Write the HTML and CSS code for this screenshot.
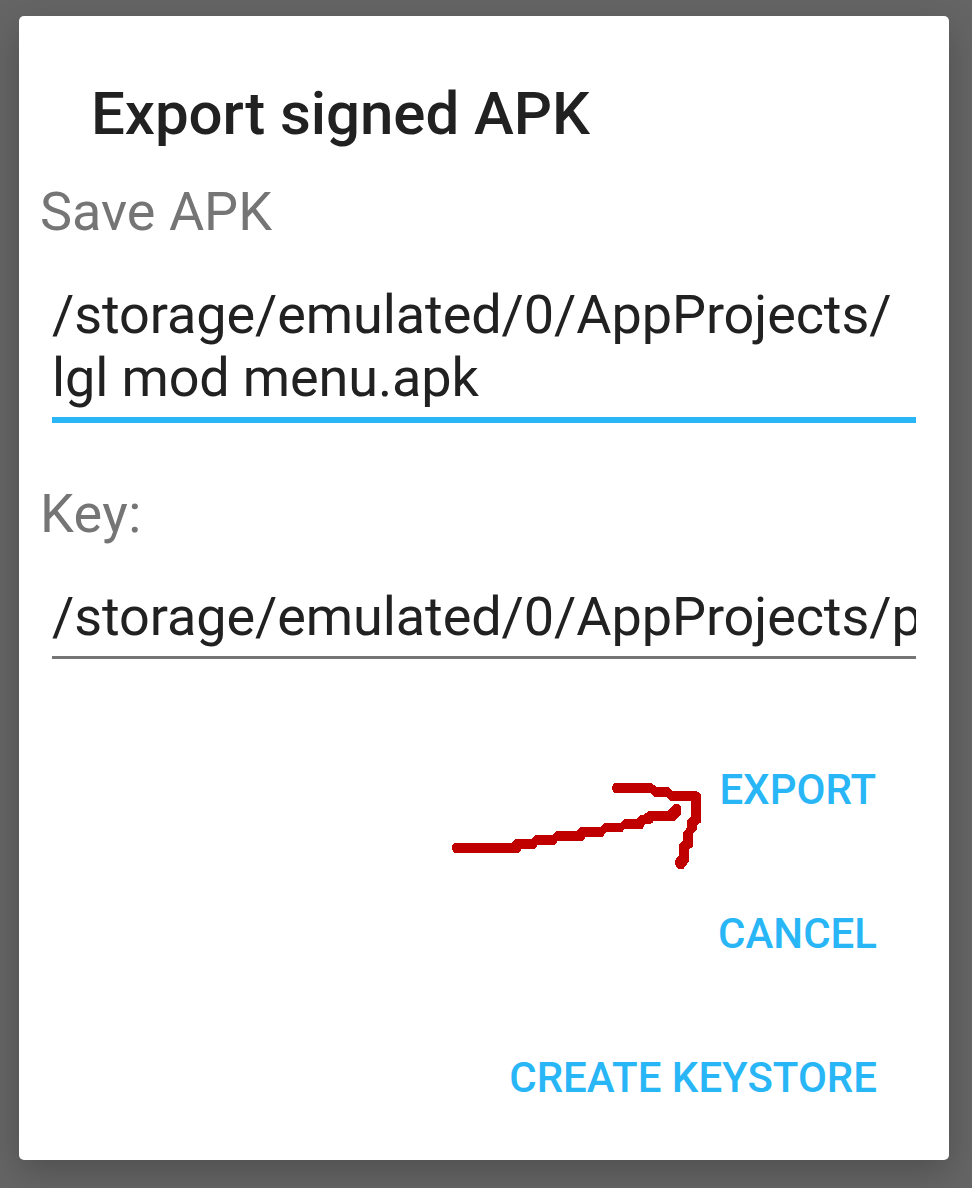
FILE: index.html
```html
<!DOCTYPE html>
<html lang="en">
<head>
<meta charset="utf-8">
<title>Export signed APK</title>
<link rel="stylesheet" href="styles.css">
</head>
<body>
<main class="dialog">
  <h1 class="title">Export signed APK</h1>
  <div class="label">Save APK</div>
  <div class="field field-active">/storage/emulated/0/AppProjects/<br><span class="filename">lgl mod menu.apk</span></div>
  <div class="label label-key">Key:</div>
  <div class="field field-key">/storage/emulated/0/AppProjects/p</div>
  <div class="actions">
    <button class="action export">EXPORT</button>
    <button class="action cancel">CANCEL</button>
    <button class="action create">CREATE KEYSTORE</button>
  </div>
  <svg class="arrow" viewBox="0 0 840 360" width="280" height="120">
    <path d="M45 249H215L228 237H273L288 225H337L350 213H409L422 201H480L495 189H540L555 177H588L600 165H610L626 153H684L698 138Q702 131 710 131Q722 133 723 144V162L705 182H638V188L630 193H615L607 207H552L547 217H497L488 231H435V235L428 243H353L345 255H293L285 267H243V271L236 279H46Q36 275 36 264Q36 252 45 249Z"/>
    <path d="M526 69H634L650 81H684L699 93H768Q783 97 783 106V187L771 195V210L759 220V260L747 268V303L730 327H714Q705 320 705 306Q705 296 718 286V252L730 240V217L742 202V181L753 168V123H692L678 111H642L630 99H526Q516 96 516 84Q516 72 526 69Z"/>
  </svg>
</main>
</body>
</html>
```
FILE: styles.css
```css
* { box-sizing: border-box; }
body { margin: 0; height: 1188px; padding: 16px 23px 28px 19px; background: #656565; font-family: Roboto, sans-serif; overflow: hidden; }
.dialog { position: relative; width: 930px; height: 1144px; padding: 63px 33px 0; background: #fff; border-radius: 5px; box-shadow: 0 12px 36px rgba(0,0,0,.22); color: #212121; }
.title { margin: 0 0 0 39px; font-size: 60px; line-height: 70px; font-weight: 500; letter-spacing: -.06px; white-space: nowrap; }
.label { margin: 31px 0 0 -12px; font-size: 54px; line-height: 63px; color: #757575; }
.field { margin-top: 40px; height: 140px; font-size: 54px; line-height: 63px; letter-spacing: -.08px; white-space: nowrap; overflow: hidden; }
.filename { letter-spacing: -.14px; }
.field-active { border-bottom: 6px solid #29b6f6; }
.label-key { margin-top: 59px; letter-spacing: .4px; }
.field-key { height: 74px; border-bottom: 3px solid #757575; }
.actions { display: flex; flex-direction: column; align-items: flex-end; margin-top: 58px; padding-right: 39px; }
.action { height: 144px; padding: 0; border: 0; background: none; color: #29b6f6; font: 500 42px/49px Roboto, sans-serif; white-space: nowrap; }
.export { margin-right: 1px; }
.arrow { position: absolute; left: 421px; top: 744px; fill: #c00000; shape-rendering: crispEdges; }
```
